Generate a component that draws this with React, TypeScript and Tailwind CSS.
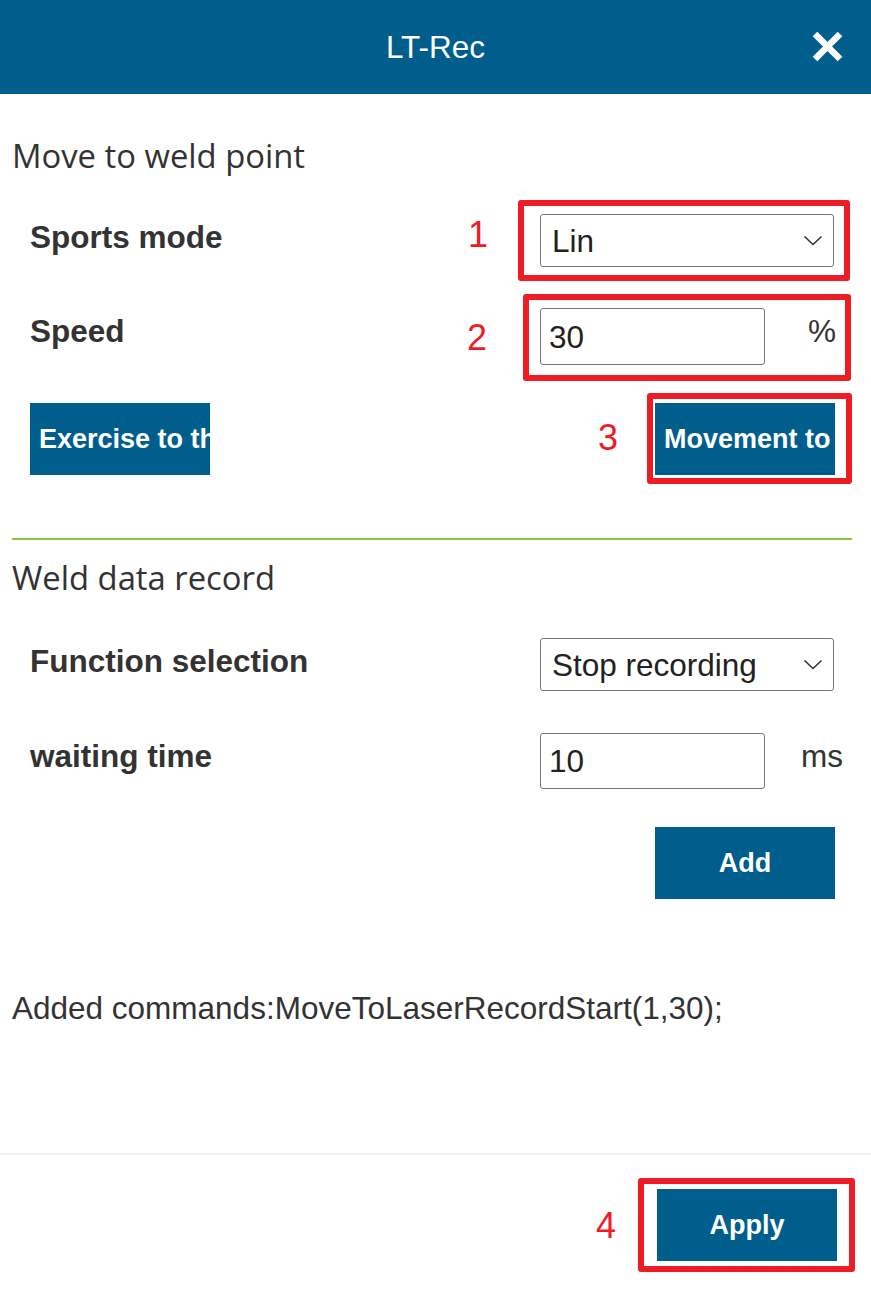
import React from "react";

function Chevron() {
  return (
    <svg width="20" height="11" viewBox="0 0 20 11" fill="none">
      <path d="M1.5 1.5 L10 9.5 L18.5 1.5" stroke="#333" strokeWidth="1.6" />
    </svg>
  );
}

function SelectBox({ value }: { value: string }) {
  return (
    <div className="w-[294px] h-[53px] border border-[#767676] rounded-[3px] bg-white flex items-center justify-between pl-[11px] pr-[10px] text-[31.5px] leading-[36px] text-[#222] font-['Liberation_Sans',sans-serif]">
      <span>{value}</span>
      <Chevron />
    </div>
  );
}

function InputWithUnit({ value, unit, h }: { value: string; unit: string; h: string }) {
  return (
    <div className="flex items-start">
      <div
        className={`w-[225px] ${h} border border-[#767676] rounded-[3px] bg-white flex items-center pl-[8px] text-[31.5px] leading-[36px] text-[#222]`}
      >
        {value}
      </div>
      <span className="w-[60px] ml-[27px] mt-[5px] text-center text-[31.5px] leading-[36px] text-[#333]">{unit}</span>
    </div>
  );
}

function Label({ children }: { children: React.ReactNode }) {
  return (
    <div className="w-[510px] shrink-0 mt-[5px] text-[31.5px] leading-[36px] font-bold text-[#333]">{children}</div>
  );
}

function BlueButton({ children }: { children: React.ReactNode }) {
  return (
    <button className="block w-[180px] h-[72px] shrink-0 overflow-hidden whitespace-nowrap text-center px-[9px] bg-[#005e8c] text-white font-bold text-[27px] leading-[72px] font-['Liberation_Sans',sans-serif]">
      {children}
    </button>
  );
}

export default function App() {
  return (
    <div className="relative w-[871px] h-[1290px] bg-white flex flex-col overflow-hidden font-['Liberation_Sans',Arial,sans-serif]">
      <header className="relative h-[94px] shrink-0 bg-[#005e8c] flex items-center justify-center">
        <span className="text-[31.5px] text-white leading-[36px]">LT-Rec</span>
        <button className="absolute right-[28px] top-[31px] w-[31px] h-[31px]" aria-label="close">
          <svg width="31" height="31" viewBox="0 0 31 31">
            <path d="M3 3 L28 28 M28 3 L3 28" stroke="#fff" strokeWidth="6.5" strokeLinecap="butt" />
          </svg>
        </button>
      </header>

      <main className="flex-1 px-[12px]">
        <h2 className="mt-[40px] text-[32.8px] leading-[44px] text-[#333] font-['Open_Sans',sans-serif] font-normal">
          Move to weld point
        </h2>

        <div className="mt-[36px] flex pl-[18px] pr-[24px]">
          <Label>Sports mode</Label>
          <SelectBox value="Lin" />
        </div>

        <div className="mt-[41px] flex pl-[18px] pr-[24px]">
          <Label>Speed</Label>
          <InputWithUnit value="30" unit="%" h="h-[57px]" />
        </div>

        <div className="mt-[38px] flex justify-between pl-[18px] pr-[24px]">
          <BlueButton>Exercise to the weld point</BlueButton>
          <BlueButton>Movement to the start point</BlueButton>
        </div>

        <div className="mt-[63px] w-[840px] h-[2px] bg-[#8cc43f]" />

        <h2 className="mt-[16px] text-[32.8px] leading-[44px] text-[#333] font-['Open_Sans',sans-serif] font-normal">
          Weld data record
        </h2>

        <div className="mt-[38px] flex pl-[18px] pr-[24px]">
          <Label>Function selection</Label>
          <SelectBox value="Stop recording" />
        </div>

        <div className="mt-[42px] flex pl-[18px] pr-[24px]">
          <Label>waiting time</Label>
          <InputWithUnit value="10" unit="ms" h="h-[56px]" />
        </div>

        <div className="mt-[38px] flex justify-end pl-[18px] pr-[24px]">
          <BlueButton>Add</BlueButton>
        </div>

        <p className="mt-[91px] text-[31.5px] leading-[36px] text-[#333] whitespace-nowrap">
          Added commands:MoveToLaserRecordStart(1,30);
        </p>
      </main>

      <footer className="h-[137px] shrink-0 border-t-2 border-[#f0f0f0] flex justify-end items-start pt-[34px] pr-[34px]">
        <BlueButton>Apply</BlueButton>
      </footer>

      {/* annotation overlay */}
      <div className="pointer-events-none absolute left-[518px] top-[200px] w-[332px] h-[81px] border-[6px] border-[#ee1c25] rounded-[3px]" />
      <div className="pointer-events-none absolute left-[523px] top-[294px] w-[328px] h-[87px] border-[6px] border-[#ee1c25] rounded-[3px]" />
      <div className="pointer-events-none absolute left-[647px] top-[393px] w-[205px] h-[91px] border-[6px] border-[#ee1c25] rounded-[3px]" />
      <div className="pointer-events-none absolute left-[638px] top-[1178px] w-[217px] h-[94px] border-[6px] border-[#ee1c25] rounded-[3px]" />

      <span className="absolute left-[468px] top-[217px] w-[20px] text-center text-[36px] leading-[36px] text-[#ee1c25]">1</span>
      <span className="absolute left-[467px] top-[320px] w-[20px] text-center text-[36px] leading-[36px] text-[#ee1c25]">2</span>
      <span className="absolute left-[598px] top-[420px] w-[20px] text-center text-[36px] leading-[36px] text-[#ee1c25]">3</span>
      <span className="absolute left-[596px] top-[1208px] w-[20px] text-center text-[36px] leading-[36px] text-[#ee1c25]">4</span>
    </div>
  );
}
